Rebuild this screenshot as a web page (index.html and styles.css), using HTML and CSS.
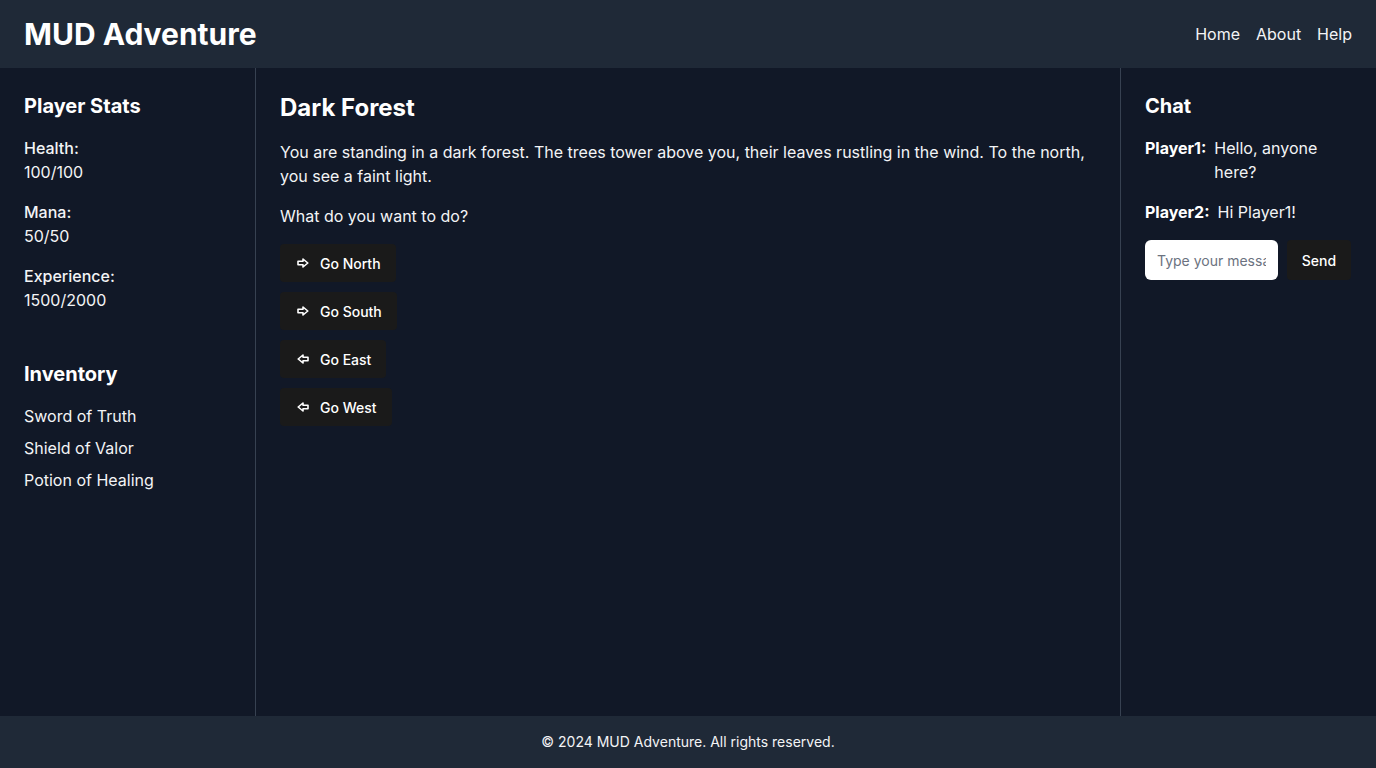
FILE: index.html
```html
<!DOCTYPE html>
<html lang="en">
<head>
<meta charset="utf-8">
<title>MUD Adventure</title>
<link rel="stylesheet" href="styles.css">
</head>
<body>
<div class="app">
  <header class="topbar">
    <h1 class="brand">MUD Adventure</h1>
    <nav class="nav">
      <a href="#">Home</a>
      <a href="#">About</a>
      <a href="#">Help</a>
    </nav>
  </header>
  <div class="content">
    <aside class="sidebar left">
      <h2 class="side-title">Player Stats</h2>
      <div class="stats">
        <div class="stat"><div class="stat-label">Health:</div><div>100/100</div></div>
        <div class="stat"><div class="stat-label">Mana:</div><div>50/50</div></div>
        <div class="stat"><div class="stat-label">Experience:</div><div>1500/2000</div></div>
      </div>
      <h2 class="side-title inv-title">Inventory</h2>
      <ul class="inventory">
        <li>Sword of Truth</li>
        <li>Shield of Valor</li>
        <li>Potion of Healing</li>
      </ul>
    </aside>
    <main class="room">
      <h2 class="room-title">Dark Forest</h2>
      <p class="room-text">You are standing in a dark forest. The trees tower above you, their leaves rustling in the wind. To the north, you see a faint light.</p>
      <p class="room-text">What do you want to do?</p>
      <div class="actions">
        <button class="action"><svg class="arrow" viewBox="0 0 12 10"><path d="M1 3.3H6V1L10.8 5L6 9V6.7H1Z"/></svg>Go North</button>
        <button class="action"><svg class="arrow" viewBox="0 0 12 10"><path d="M1 3.3H6V1L10.8 5L6 9V6.7H1Z"/></svg>Go South</button>
        <button class="action"><svg class="arrow" viewBox="0 0 12 10"><path d="M11 3.3H6V1L1.2 5L6 9V6.7H11Z"/></svg>Go East</button>
        <button class="action"><svg class="arrow" viewBox="0 0 12 10"><path d="M11 3.3H6V1L1.2 5L6 9V6.7H11Z"/></svg>Go West</button>
      </div>
    </main>
    <aside class="sidebar right">
      <h2 class="side-title">Chat</h2>
      <div class="messages">
        <div class="msg"><span class="who">Player1:</span><span class="said">Hello, anyone here?</span></div>
        <div class="msg"><span class="who">Player2:</span><span class="said">Hi Player1!</span></div>
      </div>
      <form class="chat-form">
        <input class="chat-input" type="text" placeholder="Type your message...">
        <button class="send" type="button">Send</button>
      </form>
    </aside>
  </div>
  <footer class="footer">© 2024 MUD Adventure. All rights reserved.</footer>
</div>
</body>
</html>
```
FILE: styles.css
```css
* { box-sizing: border-box; }
html, body { margin: 0; padding: 0; }
body {
  font-family: Inter, "Noto Sans", "Liberation Sans", sans-serif;
  background: #111827;
  color: #f3f4f6;
  font-size: 16px;
  line-height: 24px;
}
.app {
  min-height: 100vh;
  display: flex;
  flex-direction: column;
}
.topbar {
  background: #1f2937;
  display: flex;
  align-items: center;
  justify-content: space-between;
  padding: 16px 24px;
}
.brand {
  margin: 0;
  font-size: 30px;
  line-height: 36px;
  font-weight: 700;
  color: #ffffff;
}
.nav { display: flex; gap: 16px; }
.nav a {
  color: #f3f4f6;
  text-decoration: none;
  font-size: 16px;
}
.content {
  flex: 1;
  display: flex;
}
.sidebar {
  width: 256px;
  flex-shrink: 0;
  padding: 24px;
}
.sidebar.left { border-right: 1px solid #374151; }
.sidebar.right { border-left: 1px solid #374151; }
.side-title {
  margin: 0 0 16px;
  font-size: 20px;
  line-height: 28px;
  font-weight: 700;
  color: #ffffff;
}
.stats { display: flex; flex-direction: column; gap: 16px; }
.stat-label { font-weight: 500; }
.inv-title { margin-top: 48px; }
.inventory {
  list-style: none;
  margin: 0;
  padding: 0;
  display: flex;
  flex-direction: column;
  gap: 8px;
}
.room {
  flex: 1;
  padding: 24px;
}
.room-title {
  margin: 0 0 16px;
  font-size: 24px;
  line-height: 32px;
  font-weight: 700;
  color: #ffffff;
}
.room-text { margin: 0 0 16px; }
.actions {
  display: flex;
  flex-direction: column;
  align-items: flex-start;
  gap: 10px;
}
.action {
  display: inline-flex;
  align-items: center;
  height: 38px;
  padding: 0 15px 0 17px;
  background: #1a1a1a;
  color: #ffffff;
  border: none;
  border-radius: 4px;
  font-family: inherit;
  font-size: 14px;
  font-weight: 500;
  cursor: pointer;
}
.arrow {
  width: 12px;
  height: 10px;
  margin-right: 11px;
  fill: none;
  stroke: #ffffff;
  stroke-width: 1.6;
  stroke-linejoin: round;
}
.messages { display: flex; flex-direction: column; gap: 16px; }
.msg { display: flex; gap: 8px; }
.who { font-weight: 700; color: #ffffff; flex-shrink: 0; }
.chat-form {
  display: flex;
  gap: 9px;
  margin-top: 16px;
  padding-right: 1px;
}
.chat-input {
  flex: 1;
  min-width: 0;
  height: 40px;
  padding: 0 12px;
  border: none;
  border-radius: 6px;
  background: #ffffff;
  color: #111827;
  font-family: inherit;
  font-size: 14px;
}
.chat-input::placeholder { color: #6b7280; }
.send {
  width: 64px;
  height: 40px;
  border: none;
  border-radius: 4px;
  background: #1a1a1a;
  color: #ffffff;
  font-family: inherit;
  font-size: 14px;
  font-weight: 500;
}
.footer {
  background: #1f2937;
  text-align: center;
  padding: 16px;
  font-size: 14px;
  line-height: 20px;
  color: #f3f4f6;
}
```
